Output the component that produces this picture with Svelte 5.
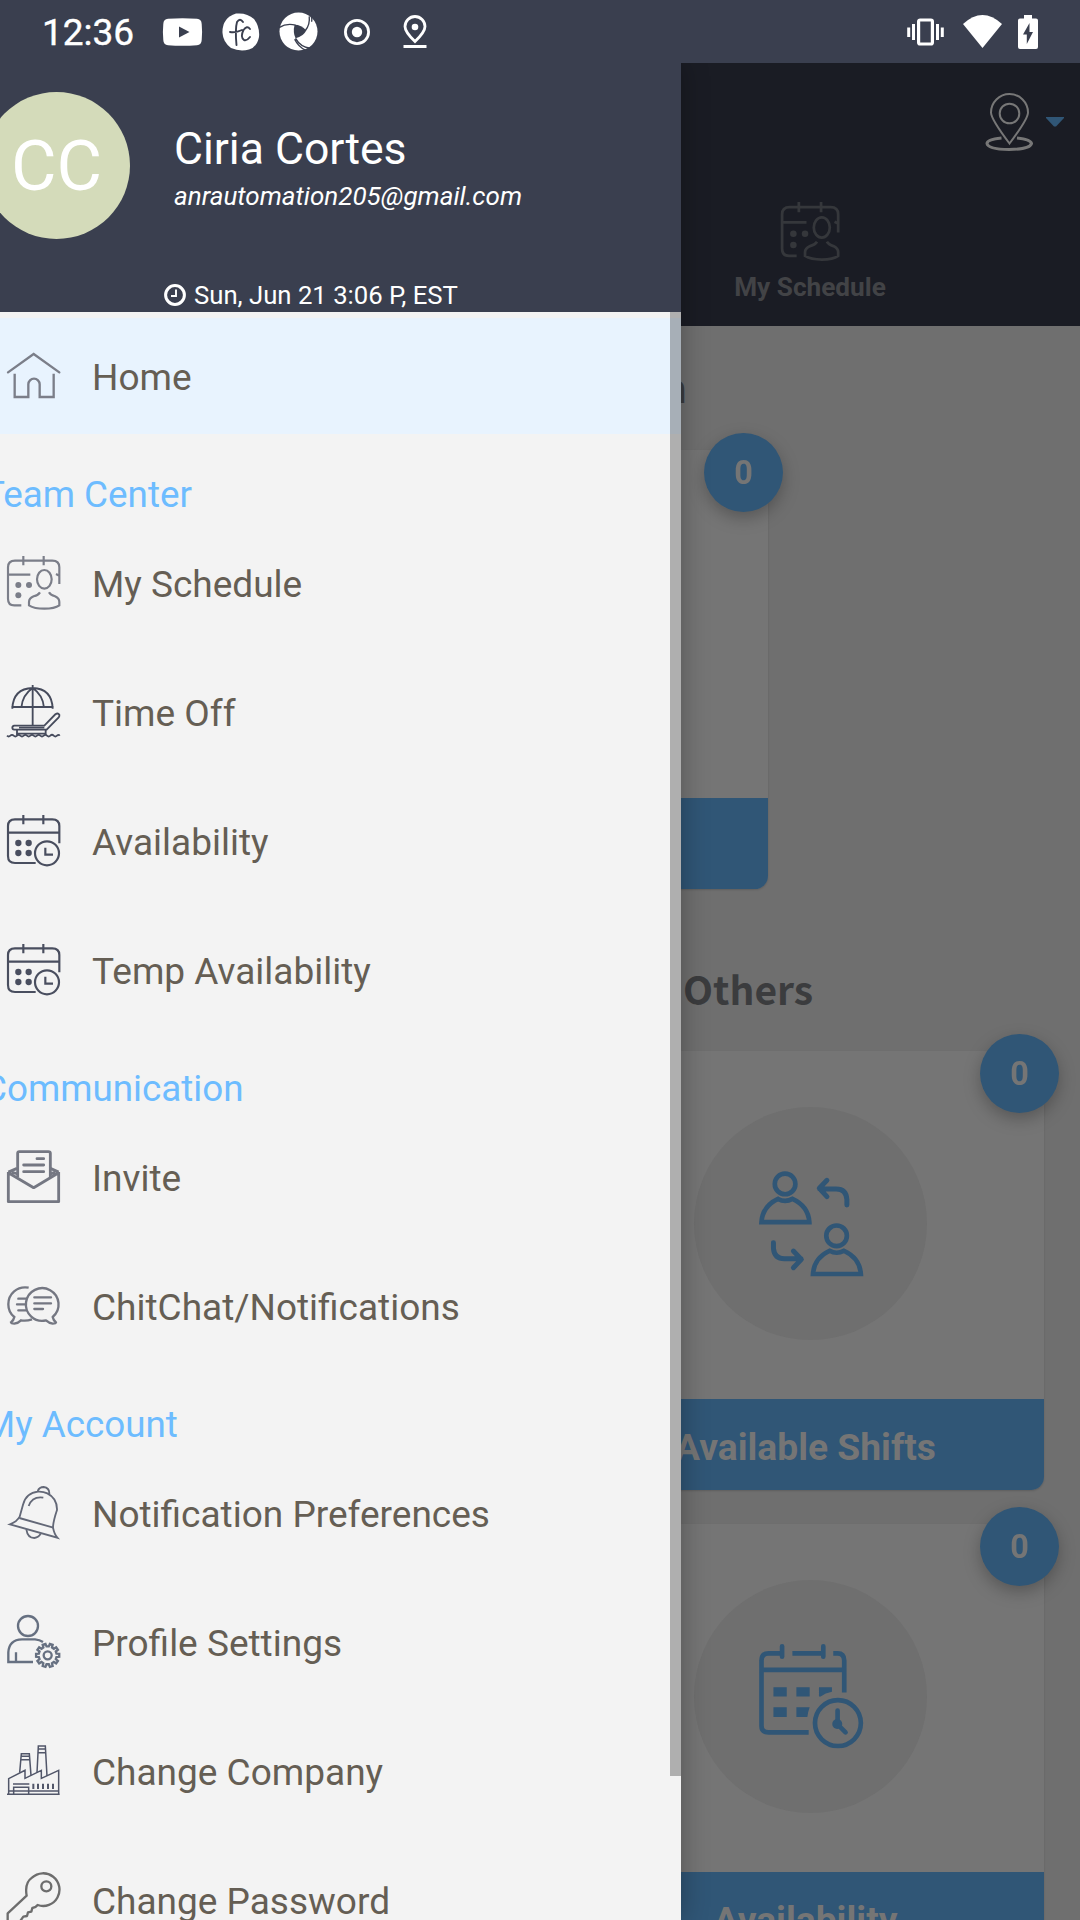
<script>
  const groups = [
    { title: null, items: [['home', 'Home']] },
    {
      title: 'Team Center',
      items: [['schedule', 'My Schedule'], ['timeoff', 'Time Off'], ['availability', 'Availability'], ['availability', 'Temp Availability']],
    },
    { title: 'Communication', items: [['invite', 'Invite'], ['chat', 'ChitChat/Notifications']] },
    {
      title: 'My Account',
      items: [['bell', 'Notification Preferences'], ['profile', 'Profile Settings'], ['company', 'Change Company'], ['key', 'Change Password']],
    },
  ];

  // Outline of a cog: teeth alternate between the outer and inner radius.
  function cog(cx, cy, outer, inner, teeth) {
    const pts = [];
    const step = (Math.PI * 2) / teeth;
    for (let i = 0; i < teeth; i++) {
      const a = i * step;
      for (const [d, r] of [[-0.3, inner], [-0.2, outer], [0.2, outer], [0.3, inner]]) {
        pts.push(`${(cx + r * Math.cos(a + d * step)).toFixed(1)} ${(cy + r * Math.sin(a + d * step)).toFixed(1)}`);
      }
    }
    return `M${pts.join('L')}Z`;
  }
  const cogPath = cog(122, 121, 35, 27, 10);
</script>

{#snippet scheduleShape()}
  <path d="M43 148H22Q3 148 3 128V34Q3 14 24 14H136Q157 14 157 34V84M3 56H70M147 54l10 5M49 0V28M110 0V28" />
  <ellipse cx="112" cy="70" rx="22" ry="28" />
  <path d="M99 109Q94 117 80 121Q66 127 66 138V148Q82 158 112 158Q143 158 157 148V138Q157 127 144 121Q130 117 126 109" />
  <g class="solid"><circle cx="34" cy="87" r="9" /><circle cx="66" cy="87" r="9" /><circle cx="34" cy="118" r="9" /></g>
{/snippet}

{#snippet icon(name)}
  <svg class="icon {name}" viewBox="0 0 162 162">
    {#if name === 'home'}
      <path d="M3 70L80 15L157 70" stroke-linecap="round" />
      <path d="M23 74V144H64V106a17 17 0 0 1 34 0V144H140V74" />
    {:else if name === 'schedule'}
      {@render scheduleShape()}
    {:else if name === 'timeoff'}
      <path d="M16 71Q18 11 77 9Q135 11 137 71M43 68Q46 30 77 9Q108 30 111 68M16 71V66H137V71M77 0V122" />
      <path d="M22 122H112L145 88q8-5 12 1q1 4-2 8L119 134H22q-6-1-6-6t6-6z" />
      <path d="M30 134V150M116 134V150M30 146H116M36 128H112" />
      <path d="M0 152q5 5 10 0t10 0t10 0t10 0t10 0t10 0t10 0t10 0t10 0t10 0t10 0t10 0t10 0t10 0t10 0t8 0" />
    {:else if name === 'availability'}
      <path d="M86 147H24Q3 147 3 126V36Q3 16 24 16H136Q157 16 157 36V88M3 56H157M49 3V31M109 3V31" />
      <circle cx="120" cy="118" r="36" /><path d="M115 101V122H138" />
      <g class="solid"><circle cx="34" cy="87" r="9.500" /><circle cx="65" cy="87" r="9.500" /><circle cx="34" cy="117" r="9.500" /><circle cx="65" cy="117" r="9.500" /></g>
    {:else if name === 'invite'}
      <path d="M4 66V155H155V66M4 68L80 113L155 68M4 66L30 55M155 66L130 55M14 66L32 72M145 66L130 72" stroke-linejoin="round" />
      <path d="M32 82V10q0-5 5-5H124q6 0 6 5V82" />
      <path d="M90 26H110M50 45H110M50 65H110" stroke-linecap="round" />
    {:else if name === 'chat'}
      <path d="M117 124A49 49 0 1 1 137 114Q139 124 147 130Q146 134 137 134Q126 132 117 124z" stroke-linejoin="round" />
      <path d="M65 26C30 20 4 45 4 76C4 92 11 106 22 114Q20 124 12 130Q13 134 22 134Q34 132 42 124Q58 127 75 121" />
      <path d="M34 59H56M30 76H53M34 94H58M82 55H132M82 73H132M82 90H108" stroke-linecap="round" />
    {:else if name === 'bell'}
      <path d="M9 115Q30 107 38 92L48 56Q58 20 93 17Q108 16 121 22Q151 37 150 72Q138 108 138 125Q142 145 151 155Z" />
      <path d="M37 96L139 125M92 15Q97 3 110 3Q128 5 127 24M65 60Q76 30 109 35M58 130Q62 156 82 156Q96 154 101 143" />
    {:else if name === 'profile'}
      <circle cx="63" cy="33" r="30" />
      <path d="M78 141H4V112Q6 74 45 73H84Q98 74 108 81M27 112V141" />
      <path d={cogPath} /><circle cx="122" cy="121" r="12" />
    {:else if name === 'company'}
      <path d="M0 151H158M5 151V104L54 79V103L103 79V103L155 79V151M5 141H155" />
      <path d="M38 86L43 29H67L72 94M43 37H67M42 47H68M90 86L94 6H115L120 96M94 15H115M93 26H116M18 120H67M20 151V130H65V151" />
      <path class="windows" d="M79 119V135M93 119V135M108 119V135M123 119V135M138 119V135" />
    {:else}
      <path d="M2 170V121L59 68Q52 30 75 14A49 49 0 1 1 92 96Q86 104 76 105L73 116L63 118L60 129L49 131L41 142L30 160" stroke-linejoin="round" />
      <circle cx="118" cy="40" r="15" />
    {/if}
  </svg>
{/snippet}

<div class="screen">
  <div class="status">
    <span class="time">12:36</span>
    <svg class="s-tube" viewBox="0 0 39 28"><path fill="#fff" d="M5 .8Q19.500-.5 34 .8Q38.500 1 38.700 6Q39.500 14 38.700 22Q38.500 27 34 27.200Q19.500 28.500 5 27.200Q.5 27 .3 22Q-.5 14 .3 6Q.5 1 5 .8Z" /><path fill="#3a3f4f" d="M16 8.500v11l10.500-5.500z" /></svg>
    <svg class="s-fc" viewBox="0 0 38 38"><path fill="#fff" d="M14 .6Q25-.5 32 6Q38 14 37 24Q35 34 27 36.500Q18 39 9 35Q1 29 .5 20Q0 5 14 .6Z" /><path fill="none" stroke="#3a3f4f" stroke-width="1.900" stroke-linecap="round" d="M21 9Q18 4.500 15 9Q13 16 14.500 32M8 19Q14 20 20 17M28 16Q25 12 21.500 17Q18 24 22 27Q25 28 28 24" /></svg>
    <svg class="s-swirl" viewBox="0 0 40 40"><circle cx="20" cy="20" r="19.500" fill="#fff" /><path fill="#3a3f4f" d="M16 13Q23 13 28 19Q25 25 17 27Q14 21 16 13Z" /><path fill="none" stroke="#3a3f4f" stroke-width="1.400" d="M0 16Q8 11 17 13.500M27 19Q32 13 31 4.500M33 3.500Q34 7 33.500 10M17 27Q22 36 32 37M16 28Q20 36 27 39" /></svg>
    <svg class="s-rec" viewBox="0 0 26 26"><circle cx="13" cy="13" r="11.600" fill="none" stroke="#fff" stroke-width="2.800" /><circle cx="13" cy="13" r="5.200" fill="#fff" /></svg>
    <svg class="s-pin" viewBox="0 0 24 34"><path fill="none" stroke="#fff" stroke-width="2.800" d="M12 26.500Q2 17 2 11.500a10 10 0 0 1 20 0Q22 17 12 26.500Z" /><circle cx="12" cy="12" r="3.300" fill="#fff" /><path fill="#fff" d="M.5 30h23v3H.5z" /></svg>
    <span class="spring"></span>
    <svg class="s-vib" viewBox="0 0 37 28"><rect x="11.600" y="2" width="13.800" height="24" rx="1.500" fill="none" stroke="#fff" stroke-width="3.200" /><path stroke="#fff" stroke-width="3" d="M6.500 6V22M30.500 6V22M1.700 9.500V19M35.300 9.500V19" /></svg>
    <svg class="s-wifi" viewBox="0 0 39 33"><path fill="#fff" d="M0 9Q19.500-9 39 9L19.500 33Z" /></svg>
    <svg class="s-bat" viewBox="0 0 20 34"><path fill="#fff" d="M6 0h8v3.500h4q2 0 2 2V32q0 2-2 2H2q-2 0-2-2V5.500q0-2 2-2h4z" /><path fill="#3a3f4f" d="M11.500 8L5 19.500h3.800V29L15 17h-3.500z" /></svg>
  </div>

  <main>
    <header class="topbar">
      <div class="location">
        <svg class="place" viewBox="0 0 48 58"><g fill="none" stroke="#777"><path stroke-width="2" d="M24.500 50.500Q6 26 6 19.500a18.500 18.500 0 0 1 37 0Q43 26 24.500 50.500Z" /><circle cx="24.500" cy="20.500" r="9.800" stroke-width="2" /><path stroke-width="3" d="M16.500 45Q2 46.500 2 50.500Q3 56.300 24 56.500Q45 56.300 46.500 50.500Q46 46.500 32 45" /></g></svg>
        <svg class="caret" viewBox="0 0 18 10"><path fill="#305676" d="M0 0h18v1L10 9.500H8L0 1z" /></svg>
      </div>
      <div class="tab">
        <svg viewBox="0 0 162 162">{@render scheduleShape()}</svg>
        <span>My Schedule</span>
      </div>
    </header>

    <h2 class="first">n</h2>
    <section class="card narrow"><div class="art"></div><div class="label"></div><b class="badge">0</b></section>
    <h2 class="others">Others</h2>
    <section class="card">
      <div class="art"><div class="disc">
        <svg viewBox="0 0 312 316" class="swap">
          {#each [[0, 0], [155, 156]] as [x, y]}
            <g transform="translate({x} {y})"><circle cx="78" cy="39" r="31" /><path d="M7 154Q10 106 57 84Q78 96 100 84Q148 106 151 154Z" /></g>
          {/each}
          <path class="arrow" d="M264 102V86Q262 54 232 54H182M204 28L181 52L204 77M43 216V233Q46 264 76 264H126M103 241L127 266L103 291" />
        </svg>
      </div></div>
      <div class="label">Available Shifts</div><b class="badge">0</b>
    </section>
    <section class="card third">
      <div class="art"><div class="disc">
        <svg viewBox="0 0 312 316" class="cal">
          <path d="M69 28H28Q7 28 7 50V246Q7 266 28 266H149M100 28H193M223 28H236Q256 28 256 50V146M7 78H256" />
          <path stroke-linecap="round" d="M69 7V38M193 7V38" />
          <circle cx="237" cy="238" r="69" />
          <path class="block" d="M43 130h40v28H43zM112 130h40v28h-40zM180 130h39v14q-20 3-34 14h-5zM43 190h40v30H43zM112 190h40q-5 13-7 30h-33z" />
          <path stroke-linecap="round" d="M236 200V242L260 266" /><circle class="block" cx="235" cy="241" r="15" />
        </svg>
      </div></div>
      <div class="label">Availability</div><b class="badge">0</b>
    </section>
  </main>

  <aside class="drawer">
    <div class="profile-head">
      <div class="who">
        <div class="avatar">CC</div>
        <div class="ident"><div class="name">Ciria Cortes</div><div class="mail">anrautomation205@gmail.com</div></div>
      </div>
      <div class="date">
        <svg viewBox="0 0 22 22"><g fill="none" stroke="#fff"><circle cx="11" cy="11" r="9.400" stroke-width="3" /><path stroke-width="1.900" d="M12 5.500V12H7" /></g></svg>
        <span>Sun, Jun 21 3:06 P, EST</span>
      </div>
    </div>
    <nav>
      {#each groups as group}
        {#if group.title}<h3>{group.title}</h3>{/if}
        {#each group.items as [glyph, label]}
          <div class="item" class:active={glyph === 'home'}>{@render icon(glyph)}<span>{label}</span></div>
        {/each}
      {/each}
      <div class="scroll"></div>
    </nav>
  </aside>
</div>

<style>
  .screen { position: relative; width: 1080px; height: 1920px; overflow: hidden; background: #6f6f6f; font-family: Roboto, sans-serif; }
  svg { display: block; flex: none; overflow: visible; }
  .status { display: flex; align-items: center; height: 63px; box-sizing: border-box; padding: 0 42px 0 42px; background: #3a3f4f; color: #fff; }
  .time { width: 121px; padding-top: 2px; font-size: 37px; line-height: 40px; font-weight: 400; -webkit-text-stroke: 0.4px #fff; }
  .spring { flex: 1; }
  .s-tube { width: 39px; height: 28px; margin-right: 20px; }
  .s-fc { width: 38px; height: 38px; margin-right: 19px; }
  .s-swirl { width: 39px; height: 39px; margin-right: 26px; }
  .s-rec { width: 26px; height: 26px; margin-right: 33px; }
  .s-pin { width: 24px; height: 34px; }
  .s-vib { width: 37px; height: 28px; margin-right: 19px; }
  .s-wifi { width: 39px; height: 33px; margin-right: 16px; }
  .s-bat { width: 20px; height: 34px; }

  main { display: flex; flex-direction: column; height: 1857px; }
  .topbar { flex: none; height: 263px; background: #1a1c24; }
  .location { display: flex; align-items: center; justify-content: flex-end; gap: 13px; padding: 30px 16px 0 0; }
  .place { width: 48px; height: 58px; }
  .caret { width: 18px; height: 10px; }
  .tab { display: flex; flex-direction: column; align-items: center; width: 540px; margin: 51px 0 0 540px; font-size: 26.2px; font-weight: 700; line-height: 30px; color: #424346; }
  .tab svg { width: 59px; height: 59px; margin-bottom: 11px; fill: none; stroke: #35373b; stroke-width: 7.5; }
  .tab .solid, .icon .solid { stroke: none; }
  .tab .solid { fill: #35373b; }
  h2 { flex: none; margin: 0; font: 600 39px/50px "Noto Sans CJK JP", sans-serif; color: #3b3c3e; }
  .first { width: 687px; height: 50px; padding: 35px 0 39px; text-align: right; }
  .others { height: 50px; padding: 74px 0 38px 683px; }
  .card { position: relative; flex: none; width: 467px; height: 439px; margin-left: 577px; background: #757575; border-radius: 0 0 13px 13px; box-shadow: 0 1px 2px rgba(0, 0, 0, 0.15); }
  .narrow { width: 456px; margin-left: 312px; }
  .third { margin-top: 34px; }
  .art { display: flex; align-items: center; justify-content: center; height: 344px; padding-bottom: 4px; }
  .disc { display: flex; align-items: center; justify-content: center; width: 233px; height: 233px; border-radius: 50%; background: #6f6f6f; }
  .disc svg { width: 104px; height: 105px; fill: none; stroke: #305676; stroke-width: 14; }
  .disc .arrow { stroke-width: 15; stroke-linecap: round; stroke-linejoin: round; }
  .disc .block { fill: #305676; stroke: none; }
  .label { height: 91px; padding-right: 10px; border-radius: 0 0 13px 13px; background: #305676; color: #757575; font-size: 37.2px; font-weight: 700; line-height: 97px; text-align: center; }
  .badge { position: absolute; top: -17px; right: -15px; width: 79px; height: 79px; border-radius: 50%; background: #305676; color: #757575; font-size: 32.5px; line-height: 80px; text-align: center; filter: drop-shadow(0 6px 8px rgba(0, 0, 0, 0.25)); }

  .drawer { position: absolute; top: 63px; left: 0; display: flex; flex-direction: column; width: 681px; height: 1857px; background: #f3f3f3; box-shadow: 0 0 26px rgba(0, 0, 0, 0.3); clip-path: inset(0 -40px 0 0); }
  .profile-head { flex: none; height: 249px; background: #3a3f4f; color: #fff; }
  .who { display: flex; align-items: center; height: 147px; padding-top: 29px; }
  .avatar { flex: none; width: 147px; height: 147px; margin-left: -17px; border-radius: 50%; background: #d4dbba; font-size: 70px; line-height: 148px; text-align: center; }
  .ident { padding: 3px 0 0 44px; }
  .name { font-size: 44.5px; line-height: 52px; }
  .mail { font-size: 26px; line-height: 30px; font-style: italic; margin-top: 6px; }
  .date { display: flex; align-items: center; gap: 8px; padding: 39px 0 0 164px; font-size: 25.7px; line-height: 34px; white-space: nowrap; }
  .date svg { width: 22px; height: 22px; }
  nav { position: relative; flex: 1; display: flex; flex-direction: column; padding-top: 6px; overflow: hidden; }
  .item { display: flex; align-items: center; flex: none; height: 116px; margin-bottom: 13px; padding-left: 7px; font-size: 37px; line-height: 44px; color: #655e54; white-space: nowrap; }
  .item span { padding: 4px 0 0 31px; }
  .active { background: #e8f3fe; }
  h3 { flex: none; height: 78px; margin: 0 0 0 -17px; font-size: 36.8px; font-weight: 400; line-height: 96px; color: #6dbcff; }
  .scroll { position: absolute; top: 0; right: 0; width: 11px; height: 1464px; background: rgba(0, 0, 0, 0.28); }

  .icon { width: 54px; height: 54px; fill: none; stroke: #7b7e89; stroke-width: 7; }
  .icon .solid { fill: #7b7e89; }
  .icon.schedule { stroke-width: 6.5; }
  .icon.timeoff { stroke: #464b5c; stroke-width: 5.5; }
  .icon.availability { stroke: #494e5f; stroke-width: 6.5; }
  .icon.availability .solid { fill: #494e5f; }
  .icon.invite { stroke: #747782; stroke-width: 8.5; }
  .icon.chat { stroke: #747782; }
  .icon.bell { stroke: #636877; stroke-width: 5.5; }
  .icon.profile { stroke: #667081; }
  .icon.company { stroke: #515669; stroke-width: 4.5; }
  .icon.company .windows { stroke-width: 6; }
  .icon.key { stroke: #6d6d6d; }
</style>
